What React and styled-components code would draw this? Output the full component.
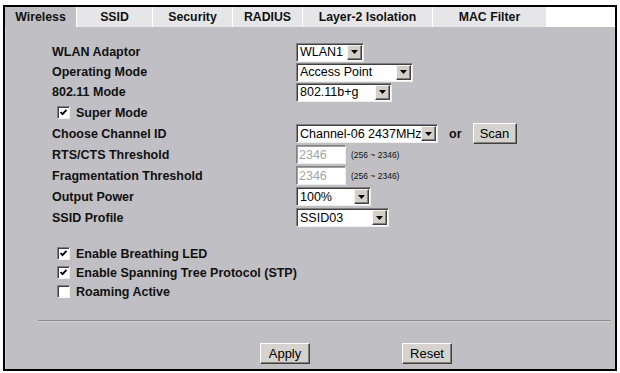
import React, {Component} from 'react';
import styled, {createGlobalStyle} from 'styled-components';

const GlobalStyle = createGlobalStyle`
    body {
        margin: 0;
        background: #fff;
        font-family: "Liberation Sans", Arial, sans-serif;
    }
`;

const Frame = styled.div`
    box-sizing: border-box;
    margin: 5px 0 0 3px;
    width: 614px;
    height: 366px;
    border: 2px solid #000;
    display: flex;
    flex-direction: column;
    background: #fff;
`;

const TabBar = styled.div`
    display: flex;
    height: 20px;
    flex-shrink: 0;
    background: #fff;
`;

const Tab = styled.div`
    box-sizing: border-box;
    width: ${p => p.w}px;
    height: 100%;
    display: flex;
    align-items: center;
    justify-content: center;
    font: bold 12.3px "Liberation Sans", Arial, sans-serif;
    color: #111;
    background: ${p => p.active ? '#c0bfc3' : '#e6e6e8'};
    border-right: 1px solid #fff;
`;

const Panel = styled.div`
    flex: 1;
    background: #c0bfc3;
    padding: 15px 2px 0 33px;
    box-shadow: inset 1px 0 #d4d3d6;
`;

const Form = styled.div`
    margin-left: 14px;
`;

const Row = styled.div`
    display: flex;
    align-items: center;
    height: ${p => p.h}px;
`;

const Label = styled.div`
    width: 244px;
    font: bold 12.5px "Liberation Sans", Arial, sans-serif;
    color: #111;
    white-space: nowrap;
`;

const CheckLabel = styled.label`
    display: flex;
    align-items: center;
    gap: 6px;
    padding-left: 5px;
    font: bold 12.5px "Liberation Sans", Arial, sans-serif;
    color: #111;
    white-space: nowrap;
`;

const CheckBox = styled.span`
    box-sizing: border-box;
    width: 13px;
    height: 13px;
    background: #fff;
    border: 1px solid;
    border-color: #808080 #f2f2f2 #f2f2f2 #808080;
    box-shadow: inset 1px 1px #404040;
    display: flex;
    align-items: center;
    justify-content: center;
`;

const SelectBox = styled.div`
    box-sizing: border-box;
    width: ${p => p.w}px;
    height: 19px;
    display: flex;
    align-items: center;
    background: #fff;
    border: 1px solid;
    border-color: #808080 #eeeeee #eeeeee #808080;
    box-shadow: inset 1px 1px #404040;
    padding: 1px 1px 1px 3px;
    font: 12.5px "Liberation Sans", Arial, sans-serif;
    color: #000;
`;

const SelectValue = styled.span`
    flex: 1;
    white-space: nowrap;
    overflow: hidden;
`;

const ArrowButton = styled.span`
    box-sizing: border-box;
    width: 15px;
    height: 15px;
    flex-shrink: 0;
    background: #d4d0c8;
    border: 1px solid;
    border-color: #f6f6f6 #404040 #404040 #f6f6f6;
    box-shadow: inset -1px -1px #808080;
    display: flex;
    align-items: center;
    justify-content: center;
`;

const TextInput = styled.div`
    box-sizing: border-box;
    width: 50px;
    height: 19px;
    display: flex;
    align-items: center;
    padding-left: 2px;
    background: #fff;
    border: 1px solid;
    border-color: #808080 #eeeeee #eeeeee #808080;
    box-shadow: inset 1px 1px #a0a0a0;
    font: 12.5px "Liberation Sans", Arial, sans-serif;
    color: #a4a4a4;
`;

const Hint = styled.span`
    margin-left: 5px;
    font: 8.5px "Liberation Sans", Arial, sans-serif;
    color: #111;
`;

const Or = styled.span`
    margin-left: 11px;
    font: bold 12.5px "Liberation Sans", Arial, sans-serif;
    color: #111;
`;

const PushButton = styled.button`
    box-sizing: border-box;
    width: ${p => p.w}px;
    height: 21px;
    margin-left: ${p => p.ml || 0}px;
    padding: 0;
    background: #d6d3ce;
    border: 1px solid;
    border-color: #fff #404040 #404040 #fff;
    box-shadow: inset -1px -1px #808080;
    font: 13px "Liberation Sans", Arial, sans-serif;
    color: #000;
`;

const CheckGroup = styled.div`
    margin-top: 16px;
`;

const Divider = styled.div`
    margin: 19px 2px 0 0;
    border-top: 1px solid #8c8c8c;
    border-bottom: 1px solid #d2d2d4;
`;

const ButtonRow = styled.div`
    display: flex;
    gap: 92px;
    margin-top: 21px;
    padding-left: 222px;
`;

const tabs = [
    {name: 'Wireless', w: 72, active: true},
    {name: 'SSID', w: 76},
    {name: 'Security', w: 80},
    {name: 'RADIUS', w: 70},
    {name: 'Layer-2 Isolation', w: 130},
    {name: 'MAC Filter', w: 114},
];

const Arrow = () => (
    <ArrowButton>
        <svg width="7" height="4" viewBox="0 0 7 4"><polygon points="0,0 7,0 3.5,4" fill="#000" /></svg>
    </ArrowButton>
);

const Check = ({checked}) => (
    <CheckBox>
        {checked && (
            <svg width="9" height="9" viewBox="0 0 9 9">
                <polyline points="1.5,4 3.5,6.2 7.5,1.8" fill="none" stroke="#000" strokeWidth="1.8" />
            </svg>
        )}
    </CheckBox>
);

const Select = ({w, value}) => (
    <SelectBox w={w}>
        <SelectValue>{value}</SelectValue>
        <Arrow />
    </SelectBox>
);

class App extends Component
{
    render = () => {
        return (
            <>
                <GlobalStyle />
                <Frame>
                    <TabBar>
                        {tabs.map(t => <Tab key={t.name} w={t.w} active={t.active}>{t.name}</Tab>)}
                    </TabBar>
                    <Panel>
                        <Form>
                            <Row h={20}>
                                <Label>WLAN Adaptor</Label>
                                <Select w={68} value="WLAN1" />
                            </Row>
                            <Row h={20}>
                                <Label>Operating Mode</Label>
                                <Select w={117} value="Access Point" />
                            </Row>
                            <Row h={20}>
                                <Label>802.11 Mode</Label>
                                <Select w={96} value="802.11b+g" />
                            </Row>
                            <Row h={21}>
                                <CheckLabel><Check checked /> Super Mode</CheckLabel>
                            </Row>
                            <Row h={21}>
                                <Label>Choose Channel ID</Label>
                                <Select w={142} value="Channel-06 2437MHz" />
                                <Or>or</Or>
                                <PushButton w={44} ml={11}>Scan</PushButton>
                            </Row>
                            <Row h={21}>
                                <Label>RTS/CTS Threshold</Label>
                                <TextInput>2346</TextInput>
                                <Hint>(256 ~ 2346)</Hint>
                            </Row>
                            <Row h={21}>
                                <Label>Fragmentation Threshold</Label>
                                <TextInput>2346</TextInput>
                                <Hint>(256 ~ 2346)</Hint>
                            </Row>
                            <Row h={21}>
                                <Label>Output Power</Label>
                                <Select w={75} value="100%" />
                            </Row>
                            <Row h={21}>
                                <Label>SSID Profile</Label>
                                <Select w={93} value="SSID03" />
                            </Row>
                            <CheckGroup>
                                <Row h={19}>
                                    <CheckLabel><Check checked /> Enable Breathing LED</CheckLabel>
                                </Row>
                                <Row h={19}>
                                    <CheckLabel><Check checked /> Enable Spanning Tree Protocol (STP)</CheckLabel>
                                </Row>
                                <Row h={19}>
                                    <CheckLabel><Check /> Roaming Active</CheckLabel>
                                </Row>
                            </CheckGroup>
                        </Form>
                        <Divider />
                        <ButtonRow>
                            <PushButton w={50}>Apply</PushButton>
                            <PushButton w={50}>Reset</PushButton>
                        </ButtonRow>
                    </Panel>
                </Frame>
            </>
        );
    }
}

export default App;
